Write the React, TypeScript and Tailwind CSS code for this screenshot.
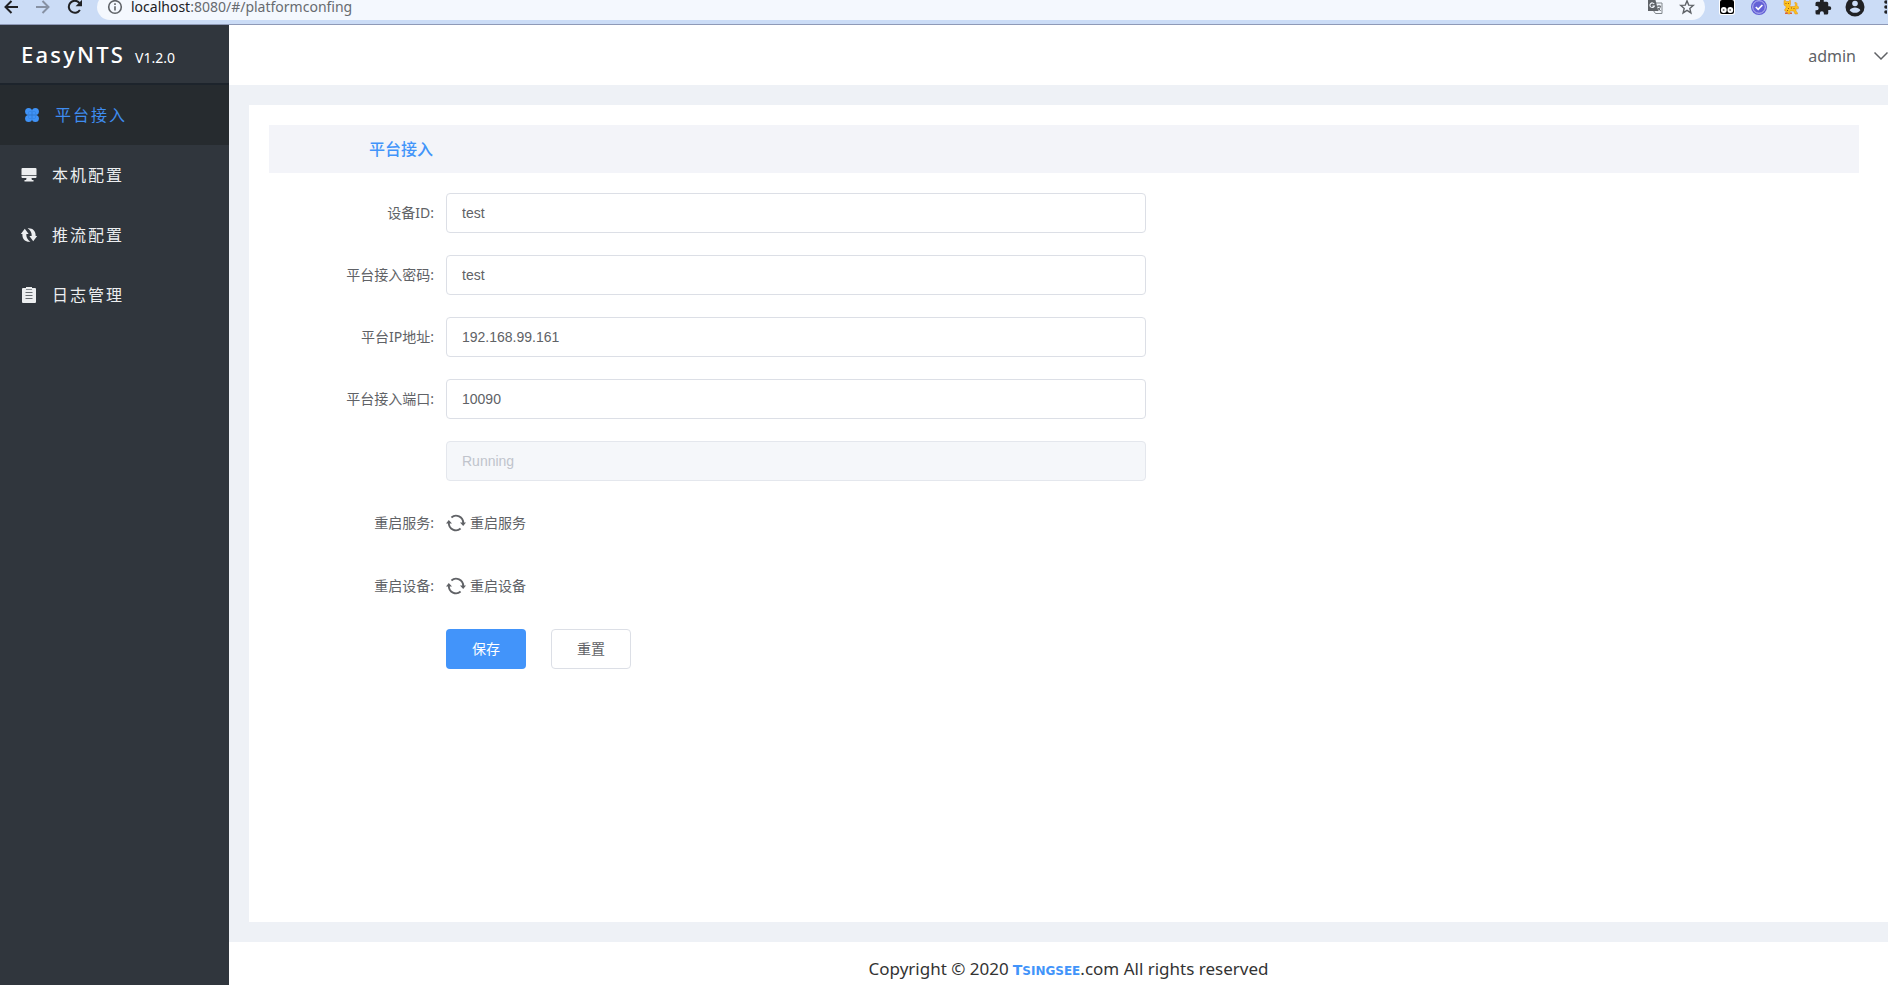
import type { ReactNode } from "react";
import { useState } from "react";

const uiFont = "font-['Noto_Sans','Noto_Sans_CJK_SC',sans-serif]";

function BackIcon({ flip = false }: { flip?: boolean }) {
  return (
    <svg viewBox="0 0 16 16" className={flip ? "h-4 w-4 rotate-180" : "h-4 w-4"} fill="none" stroke="currentColor" strokeWidth="2">
      <path d="M15 8H2.5M8.5 2 2.5 8l6 6" />
    </svg>
  );
}

function ReloadIcon() {
  return (
    <svg viewBox="0 0 16 16" className="h-4 w-4">
      <path d="M12.9 11A6 6 0 1 1 12.3 3.8L14 5.5" fill="none" stroke="currentColor" strokeWidth="2" />
      <path d="M15 .8v6.4H8.6z" fill="currentColor" />
    </svg>
  );
}

function InfoIcon() {
  return (
    <svg viewBox="0 0 16 16" className="h-4 w-4 text-[#5f6368]" fill="none" stroke="currentColor" strokeWidth="1.6">
      <circle cx="8" cy="8" r="6.3" />
      <path d="M8 7.2v4.2M8 4.3v1.6" />
    </svg>
  );
}

function TranslateIcon() {
  return (
    <svg viewBox="0 0 16 16" className="h-4 w-4">
      <path d="M7 4h8v10.500H8.500L6 11" fill="#f4f8fe" stroke="#80868b" />
      <path d="M1 1h7.500l2.800 11H1z" fill="#5f6368" />
      <path d="M7.2 5A2.3 2.3 0 1 0 7.4 7H5.4" fill="none" stroke="#f4f8fe" strokeWidth="1.1" />
      <path d="M10 7.2h4M12 6v1.2M13.4 7.4c-.4 2-1.4 3.4-2.6 4.2M11.2 9l2.4 3" fill="none" stroke="#5f6368" />
    </svg>
  );
}

function StarIcon() {
  return (
    <svg viewBox="0 0 16 16" className="h-4 w-4" fill="none" stroke="#5f6368" strokeWidth="1.4">
      <path d="m8 1.8 1.7 4.3 4.6.3-3.5 3 1.1 4.5L8 11.4l-3.9 2.5 1.1-4.5-3.5-3 4.6-.3z" />
    </svg>
  );
}

function MonkeyIcon() {
  return (
    <svg viewBox="0 0 16 16" className="h-4 w-4">
      <rect x="0" y="0" width="16" height="16" rx="2.5" fill="#fff" />
      <rect x="1" y="1" width="14" height="14" rx="2" fill="#000" />
      <circle cx="4.8" cy="11" r="2.9" fill="#fff" />
      <circle cx="11.3" cy="11" r="2.9" fill="#fff" />
      <circle cx="4.600" cy="11" r="1" fill="#777" />
      <circle cx="11.100" cy="11" r="1" fill="#777" />
    </svg>
  );
}

function BadgeIcon() {
  return (
    <svg viewBox="0 0 16 16" className="h-4 w-4">
      <circle cx="8" cy="8" r="8" fill="#6361d6" />
      <circle cx="8" cy="8" r="6.3" fill="none" stroke="#b9b8f2" strokeWidth="1" />
      <path d="m4.8 8 2.4 2.4 4.2-4.4" fill="none" stroke="#fff" strokeWidth="1.7" />
    </svg>
  );
}

function LeopardIcon() {
  return (
    <svg viewBox="0 0 16 16" className="h-4 w-4">
      <path
        d="M1 1.500h1.500L3.500 2.500h2L6.500 1.500h1v4L6.500 7.500h5.500L12.500 5l-1-1 1-1 1.500 1.500V7l1.500.8-.2 2H13v2.200l1.500 2V15H12l-1.300-3H7v3H4.800v-1.500H3V12H1.800v-2L3 9V7.500L1 6z"
        fill="#fcc21b"
        stroke="#e08a1a"
        strokeWidth=".5"
      />
      <path d="M2.500 4h1v1h-1zM5 4h1v1H5zM5 9h1v1H5zM8 8.500h1v1H8zM10.500 9h1v1h-1zM4 11h1v1H4z" fill="#9a5518" />
      <path d="M2 13.500h2.800V15H2zM7 13.500h2V15H7z" fill="#d9603b" />
    </svg>
  );
}

function PuzzleIcon() {
  return (
    <svg viewBox="0 0 24 24" className="h-[18px] w-[18px]" fill="#202124">
      <path d="M20.500 11H19V7a2 2 0 0 0-2-2h-4V3.500a2.500 2.500 0 0 0-5 0V5H4a2 2 0 0 0-2 2v3.800h1.500a2.700 2.700 0 0 1 0 5.400H2V20a2 2 0 0 0 2 2h3.800v-1.500a2.700 2.700 0 0 1 5.400 0V22H17a2 2 0 0 0 2-2v-4h1.500a2.500 2.500 0 0 0 0-5z" />
    </svg>
  );
}

function AccountIcon() {
  return (
    <svg viewBox="0 0 20 20" className="h-5 w-5">
      <circle cx="10" cy="10" r="9.500" fill="#202124" />
      <circle cx="10" cy="6.500" r="2.800" fill="#cbdcf6" />
      <path d="M4.600 13.200c1-1.800 3.400-2.600 5.400-2.600s4.400.8 5.400 2.600c-1.200 1.600-3.200 2.600-5.400 2.600s-4.200-1-5.400-2.600z" fill="#cbdcf6" />
    </svg>
  );
}

function DotsIcon() {
  return (
    <svg viewBox="0 0 8 16" className="h-4 w-2" fill="#202124">
      <circle cx="7" cy="3" r="1.800" />
      <circle cx="7" cy="8" r="1.800" />
      <circle cx="7" cy="13" r="1.800" />
    </svg>
  );
}

function BrowserBar() {
  return (
    <div className="h-[25px] shrink-0 overflow-hidden border-b border-[#8e99b7] bg-[#cbdcf6]">
      <div className="-mt-2 flex h-[30px] items-center">
        <div className="flex items-center gap-4 pr-3.5 pl-[3px] text-[#202124]">
          <button type="button" aria-label="Back"><BackIcon /></button>
          <button type="button" aria-label="Forward" className="text-[#8791a3]"><BackIcon flip /></button>
          <button type="button" aria-label="Reload"><ReloadIcon /></button>
        </div>
        <div className="flex h-[26px] flex-1 items-center rounded-full bg-[#f4f8fe] px-2.5">
          <InfoIcon />
          <p className={`${uiFont} flex-1 pl-2 text-sm text-[#676b70]`}>
            <span className="text-[#202124]">localhost</span>:8080/#/platformconfing
          </p>
          <div className="flex items-center gap-4">
            <button type="button" aria-label="Translate"><TranslateIcon /></button>
            <button type="button" aria-label="Bookmark"><StarIcon /></button>
          </div>
        </div>
        <div className="flex items-center gap-4 pr-px pl-3.5">
          <button type="button" aria-label="Scripts"><MonkeyIcon /></button>
          <button type="button" aria-label="Verified"><BadgeIcon /></button>
          <button type="button" aria-label="Leopard"><LeopardIcon /></button>
          <button type="button" aria-label="Extensions" className="-mx-px"><PuzzleIcon /></button>
          <button type="button" aria-label="Account" className="-mx-0.5"><AccountIcon /></button>
          <button type="button" aria-label="More"><DotsIcon /></button>
        </div>
      </div>
    </div>
  );
}

function CloverIcon() {
  return (
    <svg viewBox="0 0 16 16" className="h-4 w-4" fill="#3f92f6">
      <circle cx="4.600" cy="4.600" r="3.500" />
      <circle cx="11.400" cy="4.600" r="3.500" />
      <circle cx="4.600" cy="11.400" r="3.500" />
      <circle cx="11.400" cy="11.400" r="3.500" />
      <path d="M4.600 4.600h6.800v6.800H4.600z" fill="#2f78cf" />
      <path d="M5 5h2.600v2.600H5zM8.400 5H11v2.600H8.400zM5 8.400h2.600V11H5zM8.400 8.400H11V11H8.400z" />
    </svg>
  );
}

function MonitorIcon() {
  return (
    <svg viewBox="0 0 16 16" className="h-4 w-4" fill="currentColor">
      <path d="M1.500 1h13a1 1 0 0 1 1 1v6.200H.5V2a1 1 0 0 1 1-1zM.5 9h15v1a1 1 0 0 1-1 1h-4l.4 2h1.600v1.500h-9V13h1.600l.4-2h-4a1 1 0 0 1-1-1z" />
    </svg>
  );
}

function SyncIcon() {
  return (
    <svg viewBox="0 0 16 16" className="h-4 w-4" fill="currentColor">
      <path d="M3.800 1.800 7.600 7H5.400c-.4 3 .8 5.400 4 7.800C4.600 15.400 1 12.200 1.400 7H-.2z" />
      <path d="M12.200 14.200 8.400 9h2.200c.4-3-.8-5.400-4-7.800C11.400.6 15 3.800 14.600 9h1.600z" />
    </svg>
  );
}

function ClipboardIcon() {
  return (
    <svg viewBox="0 0 16 16" className="h-4 w-4">
      <path d="M2 1h3V0h6v1h3a1 1 0 0 1 1 1v13a1 1 0 0 1-1 1H2a1 1 0 0 1-1-1V2a1 1 0 0 1 1-1z" fill="currentColor" />
      <path d="M4.500 5.500h7M4.500 8.500h7M4.500 11.500h7" stroke="#666b70" strokeWidth="1" />
      <path d="M5 2.500h6" stroke="#8b9095" strokeWidth="1" />
    </svg>
  );
}

const menu: { label: string; icon: ReactNode }[] = [
  { label: "本机配置", icon: <MonitorIcon /> },
  { label: "推流配置", icon: <SyncIcon /> },
  { label: "日志管理", icon: <ClipboardIcon /> },
];

function Sidebar() {
  return (
    <aside className="w-[229px] shrink-0 bg-[#30363d]">
      <div className="flex h-[60px] items-baseline gap-2.5 border-b-2 border-[#1d242c] pt-[13px] pl-[21px] text-white">
        <span className="text-[22px] leading-8 font-medium tracking-widest">EasyNTS</span>
        <span className="text-sm leading-8">V1.2.0</span>
      </div>
      <nav>
        <a href="#/platformconfing" className="flex h-[60px] items-center gap-[15px] bg-[#262b2f] pl-6 text-base tracking-[2px] text-[#3f8df0]">
          <CloverIcon />
          平台接入
        </a>
        {menu.map((item) => (
          <a key={item.label} href="#/" className="flex h-[60px] items-center gap-[15px] pl-[21px] text-base tracking-[2px] text-[#eceef0]">
            {item.icon}
            {item.label}
          </a>
        ))}
      </nav>
    </aside>
  );
}

function RefreshIcon() {
  return (
    <svg viewBox="0 0 20 20" className="h-5 w-5" fill="none" stroke="#606266" strokeWidth="1.900">
      <path d="M5.400 4.400A7.200 7.200 0 0 1 17.200 10M14.600 15.600A7.200 7.200 0 0 1 2.800 10" />
      <path d="M14 9.400h6L17.200 13zM6 10.600H0L2.800 7z" fill="#606266" stroke="none" />
    </svg>
  );
}

const labelClass = "w-[177px] shrink-0 pr-3 text-right text-sm text-[#606266]";

function Field({ id, label, value }: { id: string; label: string; value: string }) {
  const [text, setText] = useState(value);
  return (
    <div className="flex items-center">
      <label htmlFor={id} className={labelClass}>{label}</label>
      <input
        id={id}
        value={text}
        onChange={(e) => setText(e.target.value)}
        className="h-10 w-full max-w-[700px] rounded border border-[#dcdfe6] bg-white px-[15px] font-['Liberation_Sans',sans-serif] text-sm text-[#606266] outline-none"
      />
    </div>
  );
}

function ActionRow({ label, action }: { label: string; action: string }) {
  return (
    <div className="flex h-[41px] items-center pb-0.5">
      <span className={labelClass}>{label}</span>
      <button type="button" className="flex items-center gap-1 text-sm text-[#606266]">
        <RefreshIcon />
        {action}
      </button>
    </div>
  );
}

export default function App() {
  return (
    <div className={`${uiFont} flex min-h-screen flex-col`}>
      <BrowserBar />
      <div className="flex flex-1">
        <Sidebar />
        <div className="flex min-w-0 flex-1 flex-col bg-[#eef1f6]">
          <header className="flex h-[60px] items-center justify-end bg-white pt-0.5">
            <button type="button" className="flex items-center gap-4 text-base text-[#606266]">
              admin
              <svg viewBox="0 0 16 16" className="h-4 w-4" fill="none" stroke="currentColor" strokeWidth="1.500">
                <path d="m2.500 4.500 6.500 6.500 6.500-6.500" />
              </svg>
            </button>
          </header>
          <main className="mt-5 mb-5 ml-5 flex-1 bg-white py-5 pr-[29px] pl-5">
            <h1 className="flex h-12 items-center bg-[#f3f4f9] pl-[100px] text-base font-medium text-[#4294fa]">平台接入</h1>
            <form className="mt-5 flex flex-col gap-[22px]" onSubmit={(e) => e.preventDefault()}>
              <Field id="device-id" label="设备ID:" value="test" />
              <Field id="password" label="平台接入密码:" value="test" />
              <Field id="ip" label="平台IP地址:" value="192.168.99.161" />
              <Field id="port" label="平台接入端口:" value="10090" />
              <div className="flex pl-[177px]">
                <input
                  aria-label="Status"
                  disabled
                  value="Running"
                  className="h-10 w-full max-w-[700px] rounded border border-[#e4e7ed] bg-[#f5f7fa] px-[15px] font-['Liberation_Sans',sans-serif] text-sm text-[#c0c4cc]"
                />
              </div>
              <ActionRow label="重启服务:" action="重启服务" />
              <ActionRow label="重启设备:" action="重启设备" />
              <div className="flex gap-[25px] pl-[177px] text-sm">
                <button type="submit" className="h-10 w-20 rounded bg-[#4294fa] text-white">保存</button>
                <button type="reset" className="h-10 w-20 rounded border border-[#dcdfe6] bg-white text-[#606266]">重置</button>
              </div>
            </form>
          </main>
          <footer className="flex h-[43px] items-center justify-center bg-white pt-2.5 pl-5 text-[17px] text-[#333]">
            <p className="flex items-baseline">
              Copyright © 2020
              <a href="#/" className="ml-1 font-['DejaVu_Sans',sans-serif] text-xs font-bold text-[#4294fa]">
                <span className="text-sm">T</span>SINGSEE
              </a>
              .com All rights reserved
            </p>
          </footer>
        </div>
      </div>
    </div>
  );
}
